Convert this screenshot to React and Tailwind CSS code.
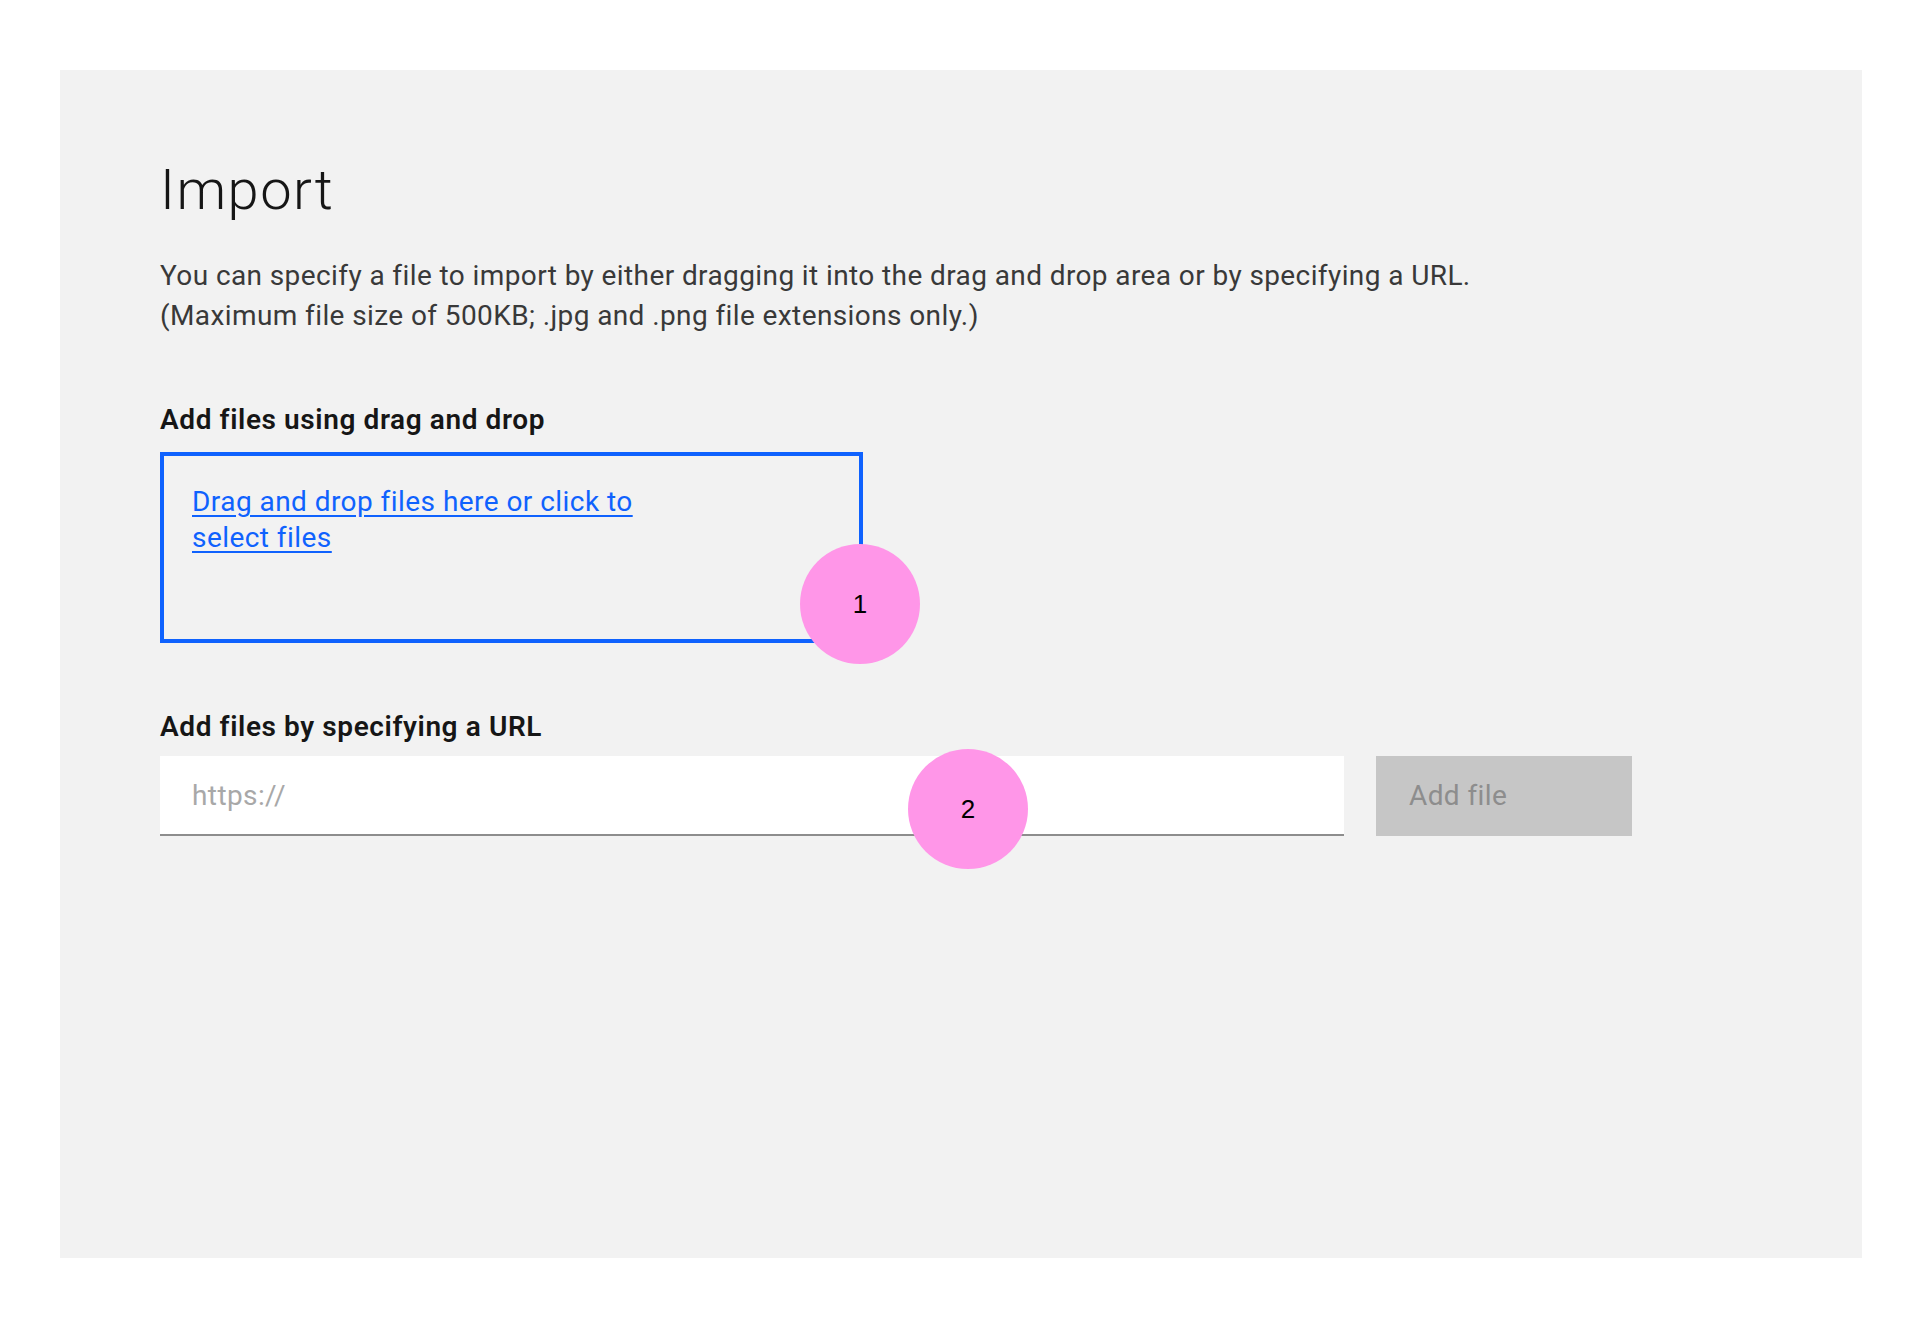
import React, { useState } from "react";

const Marker = ({ n, className }) => (
  <div
    className={`absolute w-[120px] h-[120px] rounded-full bg-[#ff96e8] flex items-center justify-center text-[26px] text-black ${className}`}
    style={{ fontFamily: "'Liberation Sans', Arial, sans-serif" }}
  >
    {n}
  </div>
);

const App = () => {
  const [url, setUrl] = useState("");

  return (
    <div
      className="min-h-screen bg-white pt-[70px] pl-[60px]"
      style={{ fontFamily: "Roboto, 'Liberation Sans', Arial, sans-serif" }}
    >
      <div className="w-[1802px] h-[1188px] bg-[#f2f2f2] pt-[84px] px-[100px]">
        {/* Title + description */}
        <h1 className="text-[56px] leading-[72px] font-light tracking-[1.5px] text-[#161616]">Import</h1>
        <p className="mt-[30px] text-[28px] leading-[40px] tracking-[0.4px] text-[#393939]">
          You can specify a file to import by either dragging it into the drag and drop area or by specifying a URL.
          <br />
          (Maximum file size of 500KB; .jpg and .png file extensions only.)
        </p>

        {/* Drag and drop */}
        <h2 className="mt-[66px] text-[28px] leading-[36px] font-semibold tracking-[0.6px] text-[#161616]">
          Add files using drag and drop
        </h2>
        <div className="relative mt-[14px] w-[703px] h-[191px] border-4 border-[#0f62fe] p-[28px]">
          <a
            href="#"
            className="text-[28px] leading-[36px] tracking-[0.45px] text-[#0f62fe] underline underline-offset-4"
          >
            Drag and drop files here or click to
            <br />
            select files
          </a>
          <Marker n="1" className="left-[636px] top-[88px]" />
        </div>

        {/* URL */}
        <h2 className="mt-[66px] text-[28px] leading-[36px] font-semibold tracking-[0.6px] text-[#161616]">
          Add files by specifying a URL
        </h2>
        <div className="relative mt-[11px] flex gap-[32px]">
          <input
            type="text"
            value={url}
            onChange={(e) => setUrl(e.target.value)}
            placeholder="https://"
            className="w-[1184px] h-[80px] bg-white border-b-2 border-[#8d8d8d] px-[32px] text-[28px] tracking-[0.4px] text-[#161616] placeholder:text-[#a8a8a8] outline-none"
          />
          <button
            disabled
            className="w-[256px] h-[80px] bg-[#c6c6c6] text-[#8d8d8d] text-[28px] tracking-[0.4px] text-left px-[33px] flex items-center"
          >
            Add file
          </button>
          <Marker n="2" className="left-[748px] top-[-7px]" />
        </div>
      </div>
    </div>
  );
};

export default App;
